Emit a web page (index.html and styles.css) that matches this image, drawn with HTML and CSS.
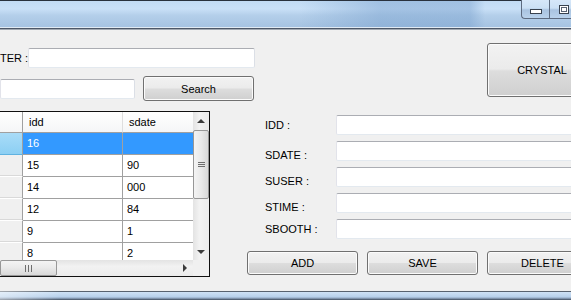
FILE: index.html
```html
<!DOCTYPE html>
<html lang="en">
<head>
    <meta charset="UTF-8">
    <title>Sales</title>
    <link rel="stylesheet" href="styles.css">
</head>
<body>
    <div class="titlebar">
        <div class="title-controls">
            <span class="ctl ctl-min"><i></i></span>
            <span class="ctl ctl-max"><i></i></span>
        </div>
    </div>
    <div class="title-edge"></div>

    <div class="form">
        <div class="top-row">
            <div class="search">
                <div class="search-line">
                    <label class="search-label">TER :</label>
                    <input class="textbox filter-box" type="text">
                </div>
                <div class="search-line second">
                    <input class="textbox query-box" type="text">
                    <button class="btn search-btn">Search</button>
                </div>
            </div>
            <button class="btn crystal-btn">CRYSTAL</button>
        </div>

        <div class="bottom-row">
            <div class="grid">
                <div class="grid-main">
                    <div class="grid-cells">
                        <div class="grid-row grid-head">
                            <div class="cell rowhead"></div>
                            <div class="cell">idd</div>
                            <div class="cell">sdate</div>
                        </div>
                        <div class="grid-row selected">
                            <div class="cell rowhead"></div>
                            <div class="cell">16</div>
                            <div class="cell"></div>
                        </div>
                        <div class="grid-row">
                            <div class="cell rowhead"></div>
                            <div class="cell">15</div>
                            <div class="cell">90</div>
                        </div>
                        <div class="grid-row">
                            <div class="cell rowhead"></div>
                            <div class="cell">14</div>
                            <div class="cell">000</div>
                        </div>
                        <div class="grid-row">
                            <div class="cell rowhead"></div>
                            <div class="cell">12</div>
                            <div class="cell">84</div>
                        </div>
                        <div class="grid-row">
                            <div class="cell rowhead"></div>
                            <div class="cell">9</div>
                            <div class="cell">1</div>
                        </div>
                        <div class="grid-row">
                            <div class="cell rowhead"></div>
                            <div class="cell">8</div>
                            <div class="cell">2</div>
                        </div>
                    </div>
                    <div class="vscroll">
                        <span class="sb-btn"><i class="arrow-up"></i></span>
                        <span class="vthumb"><i class="grip-h"></i></span>
                        <span class="sb-track"></span>
                        <span class="sb-btn"><i class="arrow-down"></i></span>
                    </div>
                </div>
                <div class="hscroll">
                    <span class="hthumb"><i class="grip-v"></i></span>
                    <span class="sb-track"></span>
                    <span class="sb-btn"><i class="arrow-right"></i></span>
                    <span class="corner"></span>
                </div>
            </div>

            <div class="editor">
                <div class="field">
                    <label>IDD :</label>
                    <input class="textbox" type="text">
                </div>
                <div class="field drop">
                    <label>SDATE :</label>
                    <input class="textbox" type="text">
                </div>
                <div class="field drop">
                    <label>SUSER :</label>
                    <input class="textbox" type="text">
                </div>
                <div class="field drop">
                    <label>STIME :</label>
                    <input class="textbox" type="text">
                </div>
                <div class="field">
                    <label>SBOOTH :</label>
                    <input class="textbox" type="text">
                </div>
                <div class="actions">
                    <button class="btn">ADD</button>
                    <button class="btn">SAVE</button>
                    <button class="btn">DELETE</button>
                </div>
            </div>
        </div>
    </div>

    <div class="taskbar"></div>
</body>
</html>
```

FILE: styles.css
```css
* {
    margin: 0;
    padding: 0;
    box-sizing: border-box;
}

body {
    width: 571px;
    height: 300px;
    overflow: hidden;
    background: #f0f0f0;
    font-family: "Liberation Sans", Arial, sans-serif;
    font-size: 11px;
    color: #000;
}

/* window title bar */
.titlebar {
    height: 27px;
    border-top: 1px solid #29313d;
    display: flex;
    background:
        linear-gradient(90deg, rgba(120, 160, 205, 0) 300px, rgba(120, 160, 205, 0.45) 380px, rgba(120, 160, 205, 0.45) 470px, rgba(120, 160, 205, 0) 485px),
        linear-gradient(180deg, #c2dbf4 0%, #c9e0f7 30%, #b4cfea 55%, #a6c3e2 100%);
}

.title-edge {
    height: 3px;
    background: linear-gradient(#e0eaf4 0 1px, #4d5767 1px 2px, #a2a9b2 2px 3px);
}

.title-controls {
    display: flex;
    margin-left: auto;
    margin-right: -6px;
    margin-top: -1px;
    height: 19px;
}

.ctl {
    display: flex;
    justify-content: center;
    border-left: 1px solid #5d6b80;
    border-bottom: 1px solid #5d6b80;
    background: linear-gradient(#d6e7f9 0%, #cbe0f5 45%, #a9c3e0 55%, #b9d2ec 100%);
}

.ctl-min {
    width: 28px;
    border-bottom-left-radius: 4px;
    align-items: flex-end;
    padding-bottom: 4px;
}

.ctl-min i {
    width: 12px;
    height: 5px;
    border: 1px solid #39424f;
    background: #fff;
}

.ctl-max {
    width: 28px;
    align-items: center;
}

.ctl-max i {
    width: 10px;
    height: 9px;
    border: 1px solid #39424f;
    background: #fff;
    box-shadow: inset 0 0 0 1px #fff, inset 0 0 0 2px #5a6474;
}

/* form body */
.form {
    height: 261px;
    padding-top: 13px;
}

.top-row {
    display: flex;
    align-items: flex-start;
    height: 57px;
}

.search {
    flex: none;
    width: 255px;
    padding-top: 5px;
}

.search-line {
    display: flex;
    align-items: center;
}

.search-line.second {
    margin-top: 8px;
}

.search-label {
    flex: none;
    width: 28px;
    white-space: nowrap;
    overflow: hidden;
}

.textbox {
    flex: none;
    height: 20px;
    border: 1px solid;
    border-color: #abadb3 #dbdfe6 #e3e9ef #e2e3ea;
    border-radius: 2px;
    background: #fff;
    outline: none;
}

.filter-box {
    width: 227px;
}

.query-box {
    width: 135px;
}

.btn {
    flex: none;
    font: inherit;
    color: #000;
    border: 1px solid #707070;
    border-radius: 3px;
    background: linear-gradient(#f2f2f2 0%, #ebebeb 48%, #dddddd 52%, #cfcfcf 100%);
    box-shadow: inset 0 0 0 1px #fbfbfb;
}

.search-btn {
    width: 111px;
    height: 25px;
    margin-left: 8px;
}

.crystal-btn {
    width: 110px;
    height: 54px;
    margin-left: 232px;
}

.bottom-row {
    display: flex;
    margin-top: 11px;
}

/* data grid */
.grid {
    flex: none;
    width: 211px;
    height: 166px;
    margin-left: -1px;
    border: 1px solid #101010;
    background: #fff;
    display: flex;
    flex-direction: column;
}

.grid-main {
    display: flex;
    height: 148px;
}

.grid-cells {
    width: 193px;
    overflow: hidden;
}

.grid-row {
    display: grid;
    grid-template-columns: 23px 100px 100px;
    height: 22px;
}

.cell {
    border-right: 1px solid #a0a0a0;
    border-bottom: 1px solid #a0a0a0;
    padding-left: 4px;
    line-height: 21px;
    white-space: nowrap;
}

.cell.rowhead {
    background: #f0f0f0;
    border-right-color: #a0a0a0;
    border-bottom-color: #fff;
    box-shadow: inset 0 -1px 0 #d9d9d9;
}

.grid-head {
    height: 21px;
}

.grid-head .cell {
    padding-left: 6px;
    line-height: 20px;
    background: linear-gradient(#ffffff, #f5f6f7);
    border-right-color: #dedede;
    border-bottom-color: #a0a0a0;
}

.grid-head .cell.rowhead {
    border-right-color: #a0a0a0;
    box-shadow: none;
}

.selected .cell {
    background: #3399ff;
    color: #fff;
}

.selected .cell.rowhead {
    background: linear-gradient(#a9dcf8, #8ccff3);
    border-bottom-color: #5fb2e0;
    box-shadow: none;
}

/* scrollbars */
.vscroll {
    width: 16px;
    display: flex;
    flex-direction: column;
    background: linear-gradient(90deg, #e3e3e3, #f2f2f2 40%, #ebebeb);
}

.sb-btn {
    flex: none;
    width: 16px;
    height: 17px;
    display: flex;
    align-items: center;
    justify-content: center;
}

.sb-track {
    flex: 1;
}

.vthumb {
    flex: none;
    height: 69px;
    margin: 1px 0 0 0;
    border: 1px solid #979797;
    border-radius: 2px;
    background: linear-gradient(90deg, #f4f4f4, #e9e9e9 50%, #d8d8d8);
    display: flex;
    align-items: center;
    justify-content: center;
}

.grip-h {
    width: 7px;
    height: 6px;
    background: repeating-linear-gradient(180deg, #6e6e6e 0 1px, transparent 1px 2px);
}

.arrow-up {
    border-left: 4px solid transparent;
    border-right: 4px solid transparent;
    border-bottom: 4px solid #3c3c3c;
}

.arrow-down {
    border-left: 4px solid transparent;
    border-right: 4px solid transparent;
    border-top: 4px solid #3c3c3c;
}

.arrow-right {
    border-top: 4px solid transparent;
    border-bottom: 4px solid transparent;
    border-left: 4px solid #3c3c3c;
}

.hscroll {
    height: 16px;
    display: flex;
    background: linear-gradient(#e3e3e3, #f2f2f2 40%, #ebebeb);
}

.hscroll .sb-btn {
    height: 16px;
}

.hthumb {
    flex: none;
    width: 57px;
    border: 1px solid #979797;
    border-radius: 2px;
    background: linear-gradient(#f4f4f4, #e9e9e9 50%, #d8d8d8);
    display: flex;
    align-items: center;
    justify-content: center;
}

.grip-v {
    width: 7px;
    height: 7px;
    background: repeating-linear-gradient(90deg, #6e6e6e 0 1px, transparent 1px 3px);
}

.corner {
    flex: none;
    width: 16px;
    background: #f0f0f0;
}

/* record editor */
.editor {
    flex: none;
    margin-left: 37px;
    margin-top: 4px;
    display: flex;
    flex-direction: column;
}

.field {
    display: flex;
    align-items: center;
    height: 20px;
    margin-bottom: 6px;
}

.field label {
    flex: none;
    width: 89px;
    padding-left: 18px;
    line-height: 13px;
}

.field.drop label {
    padding-top: 8px;
}

.field .textbox {
    width: 240px;
}

.actions {
    display: flex;
    gap: 9px;
    margin-top: 6px;
}

.actions .btn {
    width: 111px;
    height: 24px;
}

.taskbar {
    height: 9px;
    background:
        linear-gradient(90deg, rgba(255, 255, 255, 0.45) 0, rgba(255, 255, 255, 0) 60px),
        linear-gradient(#58626f 0 1px, #cfe2f6 1px, #b6cfea 6px, #6d8098 8px, #3a4452 9px);
}
```
